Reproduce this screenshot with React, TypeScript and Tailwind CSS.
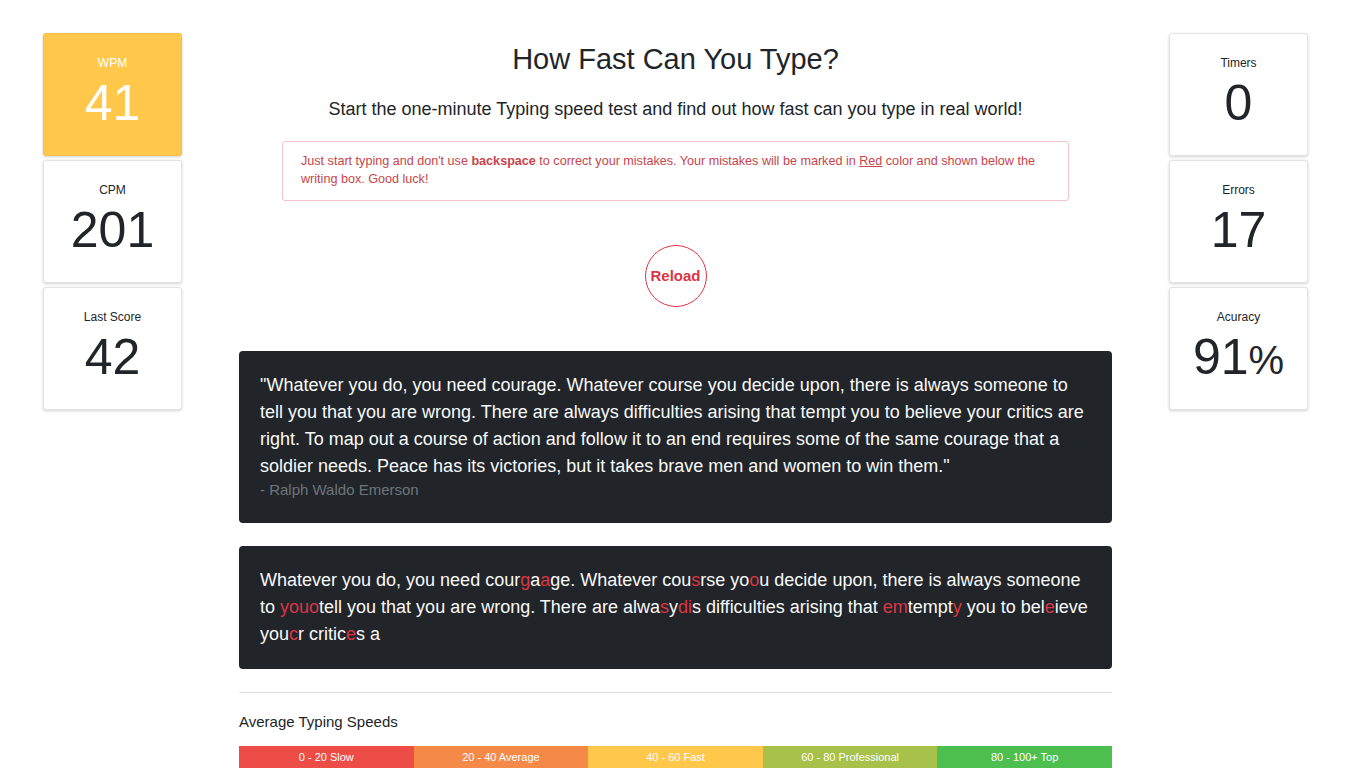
import React from "react";

const font = { fontFamily: '"Liberation Sans", Arial, sans-serif' };

function StatCard({ label, value, highlight, suffix }: { label: string; value: string; highlight?: boolean; suffix?: string }) {
  return (
    <div
      className={`h-[123px] w-[139px] rounded-[3px] border text-center shadow-[0_1px_3px_rgba(0,0,0,0.18)] ${
        highlight ? "border-[#f5c04a] bg-[#ffc84b] text-white" : "border-[#e3e3e3] bg-white text-[#212529]"
      }`}
    >
      <div className="pt-[21px] text-[12px] leading-[16px]">{label}</div>
      <div className="mt-[7px] text-[50px] leading-[50px]">
        {value}
        {suffix && <span className="text-[40px]">{suffix}</span>}
      </div>
    </div>
  );
}

const R = ({ children }: { children: React.ReactNode }) => <span className="text-[#dc3545]">{children}</span>;

export default function App() {
  return (
    <div className="min-h-screen bg-white text-[#212529]" style={font}>
      <div className="flex gap-[57px] px-[43px] pb-[80px]">
        <div className="flex flex-col gap-[4px] pt-[33px]">
          <StatCard label="WPM" value="41" highlight />
          <StatCard label="CPM" value="201" />
          <StatCard label="Last Score" value="42" />
        </div>

        <div className="flex w-[873px] flex-col items-center pt-[41px]">
          <h1 className="text-[29px] leading-[36px] font-normal">How Fast Can You Type?</h1>
          <p className="mt-[20px] text-[18px] leading-[24px]">
            Start the one-minute Typing speed test and find out how fast can you type in real world!
          </p>
          <div className="mt-[20px] w-[787px] rounded-[3px] border border-[#f3c4c8] bg-white px-[18px] pt-[10px] pb-[12px] text-[12.6px] leading-[18px] text-[#c9444b]">
            Just start typing and don't use <b>backspace</b> to correct your mistakes. Your mistakes will be marked in{" "}
            <u>Red</u> color and shown below the writing box. Good luck!
          </div>
          <button className="mt-[44px] flex h-[62px] w-[62px] items-center justify-center rounded-full border border-[#dc3545] bg-white text-[15px] font-bold text-[#dc3545]">
            Reload
          </button>

          <div className="mt-[44px] w-full rounded-[4px] bg-[#212529] px-[21px] pt-[21px] pb-[23px] text-[#f8f9fa]">
            <div className="text-[18px] leading-[27px]">
              "Whatever you do, you need courage. Whatever course you decide upon, there is always someone to tell you that
              you are wrong. There are always difficulties arising that tempt you to believe your critics are right. To map
              out a course of action and follow it to an end requires some of the same courage that a soldier needs. Peace
              has its victories, but it takes brave men and women to win them."
            </div>
            <div className="text-[15px] leading-[20px] text-[#6c757d]">- Ralph Waldo Emerson</div>
          </div>

          <div className="mt-[23px] w-full rounded-[4px] bg-[#212529] px-[21px] py-[21px] text-[18px] leading-[27px] text-[#f8f9fa]">
            Whatever you do, you need cour<R>g</R>a<R>a</R>ge. Whatever cou<R>s</R>rse yo<R>o</R>u decide upon, there is
            always someone to <R>youo</R>tell you that you are wrong. There are alwa<R>s</R>y<R>di</R>s difficulties
            arising that <R>em</R>tempt<R>y</R> you to bel<R>e</R>ieve you<R>c</R>r critic<R>e</R>s a
          </div>

          <div className="mt-[23px] h-px w-full bg-[#e2e2e2]" />

          <div className="mt-[19px] w-full text-[15px] leading-[20px]">Average Typing Speeds</div>
          <div className="mt-[14px] flex h-[22px] w-full text-[11px] text-white">
            <div className="flex flex-1 items-center justify-center bg-[#ee4c47]">0 - 20 Slow</div>
            <div className="flex flex-1 items-center justify-center bg-[#f58a48]">20 - 40 Average</div>
            <div className="flex flex-1 items-center justify-center bg-[#ffc84b]">40 - 60 Fast</div>
            <div className="flex flex-1 items-center justify-center bg-[#a8c14a]">60 - 80 Professional</div>
            <div className="flex flex-1 items-center justify-center bg-[#4dbf4f]">80 - 100+ Top</div>
          </div>
        </div>

        <div className="flex flex-col gap-[4px] pt-[33px]">
          <StatCard label="Timers" value="0" />
          <StatCard label="Errors" value="17" />
          <StatCard label="Acuracy" value="91" suffix="%" />
        </div>
      </div>
    </div>
  );
}
